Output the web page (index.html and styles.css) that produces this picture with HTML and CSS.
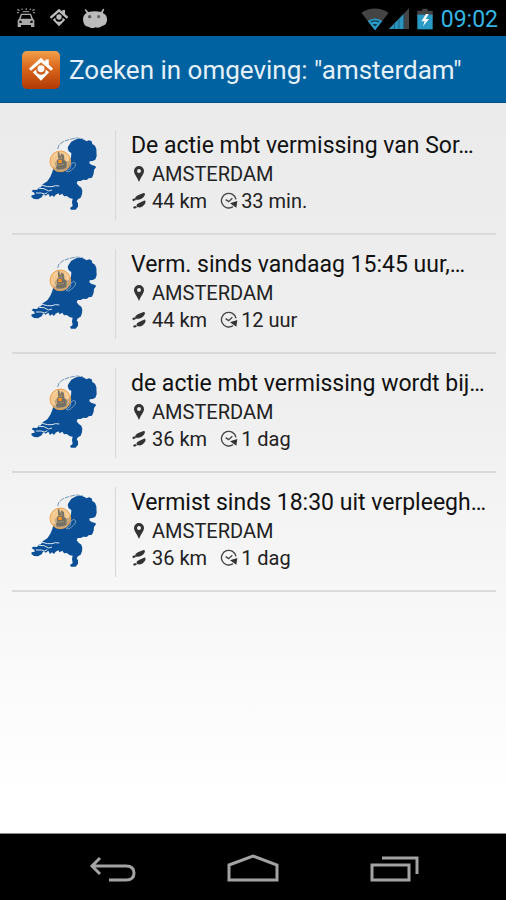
FILE: index.html
```
<!DOCTYPE html>
<html lang="nl">
<head>
    <meta charset="UTF-8">
    <meta name="viewport" content="width=device-width, initial-scale=1.0">
    <title>Zoeken in omgeving</title>
    <link rel="stylesheet" href="styles.css">
</head>
<body>
    <!-- shared icons -->
    <svg class="sprite" aria-hidden="true">
        <symbol id="map" viewBox="0 -4 270 270">
            <path fill="#0b4f97" d="M140 43l8-12 14-7 16-2 10 4 5 4 8-3 8 3 2 8 8 5 4 10 1 22-4 10-8 4-9 1-1 6 7 5 11 3 2 4-6 8-1 11-5 12-10 2-6 5-10-1-8 4-9 0-3 7 6 7 8 6 3 9-1 11-4 10-8 5-4 6 4 6 0 10-7 9-14 0-3-5 8-6-2-12 2-10-8-1-10-7-8 1-5-8-8 5-4-6-8 4-5 7-6-5-6 5-5-10-8 6-7-4-5 9-11 6-12-1-8-6 1-5 9-2-1-6-8-4 4-5 12 1 5-7 7-1 5-9 14-9 9-14 6-14 4-16 4-14 20-8 14 2 8-8-2-14-6-8z"/>
            <path fill="none" stroke="#d8e2ec" stroke-width="3" d="M54 160l22 6 14 0 10-3 12 1M50 171l16 1 14 7 10-3M42 185l16 0 10 3 8-4"/>
            <path fill="none" stroke="#769bbf" stroke-width="3" d="M132 120l12-8 3-14 8-5 6 4-2 9-10 10-9 6z"/>
            <path fill="none" stroke="#6e93b8" stroke-width="3" stroke-dasharray="14 3" d="M107 53l4-12 12-10 20-7 20-4 19 2"/>
            <path fill="#eef0f1" d="M108 62l5-16 13-10 16-6-6 16 4 14 8 5-1 14-12 12-12-6z"/>
            <circle cx="115" cy="90" r="31" fill="#f5bd75" fill-opacity=".8" stroke="#eda34d" stroke-width="3"/>
            <path fill="none" stroke="#fbdcae" stroke-width="3" d="M94 77q6-12 17-12M94 96q4 13 14 17M127 70q12 7 12 19"/>
            <path fill="#6b6a62" fill-opacity=".9" d="M107 63l5 0 2 12 5-9 7 6 1 14 7 6-1 18-10 4-17 1-5-5 5-10-2-12 5-6z"/>
            <path fill="none" stroke="#bd9b6f" stroke-width="2" d="M109 82h12M108 102l18-3M118 73v9"/>
            <path fill="#ff941e" d="M109 86h10v9h-10z"/>
        </symbol>
        <symbol id="pin" viewBox="0 0 12 18">
            <path fill="#333" fill-rule="evenodd" d="M6 1a5 5 0 0 0-5 5c0 3 3 6 5 11 2-5 5-8 5-11a5 5 0 0 0-5-5zm0 3a2 2 0 1 1 0 4 2 2 0 0 1 0-4z"/>
        </symbol>
        <symbol id="steps" viewBox="0 0 48 54">
            <path fill="#333" d="M13 17c3-7 14-9 25-14 4-1 5 4 2 9-5 8-12 11-20 11-6 0-9-2-7-6zM17 39c3-7 13-8 22-13 5-1 6 4 3 9-5 8-12 12-19 11-5 0-8-2-6-7zM4 22l7-3 4 5-9 4zM6 45l7-3 5 5-9 3z"/>
        </symbol>
        <symbol id="clock" viewBox="0 0 54 54">
            <path fill="none" stroke="#444" stroke-width="4" d="M39 44A22 22 0 1 1 48 22"/>
            <path fill="none" stroke="#444" stroke-width="4" d="M17 23l9 6 11-10"/>
            <path fill="#333" d="M30 34l22-7-3 20z"/>
        </symbol>
        <symbol id="house" viewBox="0 0 60 60">
            <path fill="currentColor" d="M2 27L30 2l10 9V6h8v12l10 9-5 5-23-20L7 32z"/>
            <path fill="currentColor" d="M11 35l8-6q0 12 11 12t11-12l8 6-19 20z"/>
            <circle cx="30" cy="27" r="8" fill="currentColor"/>
        </symbol>
    </svg>

    <div class="statusbar">
        <div class="notifications">
            <svg width="20" height="20" viewBox="0 0 60 60">
                <path fill="#aaa" fill-rule="evenodd" d="M15 17h30l6 15 4 5v20H45v-6H15v6H5V37l4-5zM18 21l-4 11h32l-4-11zM10 38v6h9l-4-6zM41 44h9v-6h-5z"/>
                <path stroke="#888" stroke-width="4" d="M20 11h20M4 4l7 4M17 2l2 4M31 1v5M44 2l-2 4M56 4l-7 4M3 14h6M51 14h6"/>
            </svg>
            <svg class="house" width="20" height="20"><use href="#house"/></svg>
            <svg width="26" height="20" viewBox="0 0 78 60">
                <path fill="#bbb" d="M14 15L8 5l3-2 8 9q20-5 38 0l6-10 4 2-5 11q14 5 13 22-1 15-15 17-8 7-20 4-8 5-19-1Q3 55 3 34q0-14 11-19z"/>
                <circle cx="23" cy="26" r="5" fill="#555"/>
                <circle cx="50" cy="26" r="5" fill="#666"/>
            </svg>
        </div>
        <div class="system">
            <svg width="28" height="24" viewBox="0 0 84 72">
                <path fill="#444" d="M1 17q41-25 82 0L42 70z"/>
                <path fill="#289dca" d="M20 42q22-15 44 0L42 70z"/>
                <path fill="none" stroke="#173746" stroke-width="4" d="M29 45q13-7 26 0"/>
                <path fill="#173746" d="M35 51h14l-7 8z"/>
            </svg>
            <svg width="20" height="22" viewBox="0 0 60 66">
                <path fill="#444" d="M60 1v62H0z"/>
                <path fill="#2a93bd" d="M44 18v45H0z"/>
                <path stroke="#164c62" stroke-width="2" d="M16 47v16M30 33v30M45 17v46"/>
            </svg>
            <svg class="battery" width="16" height="22" viewBox="0 0 48 66">
                <path fill="#444" d="M16 2h16v6h15v20H1V8h15z"/>
                <path fill="#2999c5" d="M1 20h46v44H1z"/>
                <path fill="#fff" d="M27 18L13 40h10l-5 15 18-22H26l9-15z"/>
            </svg>
            <time>09:02</time>
        </div>
    </div>

    <header class="header">
        <span class="logo"><svg width="28" height="26"><use href="#house"/></svg></span>
        <h1>Zoeken in omgeving: "amsterdam"</h1>
    </header>

    <main>
        <ul class="list">
            <li><a class="item" href="#">
                <svg class="map"><use href="#map"/></svg>
                <div class="info">
                    <h2>De actie mbt vermissing van Sor…</h2>
                    <p><svg class="icon"><use href="#pin"/></svg>AMSTERDAM</p>
                    <p><svg class="icon"><use href="#steps"/></svg>44 km<svg class="icon clock"><use href="#clock"/></svg>33 min.</p>
                </div>
            </a></li>
            <li><a class="item" href="#">
                <svg class="map"><use href="#map"/></svg>
                <div class="info">
                    <h2>Verm. sinds vandaag 15:45 uur,…</h2>
                    <p><svg class="icon"><use href="#pin"/></svg>AMSTERDAM</p>
                    <p><svg class="icon"><use href="#steps"/></svg>44 km<svg class="icon clock"><use href="#clock"/></svg>12 uur</p>
                </div>
            </a></li>
            <li><a class="item" href="#">
                <svg class="map"><use href="#map"/></svg>
                <div class="info">
                    <h2>de actie mbt vermissing wordt bij…</h2>
                    <p><svg class="icon"><use href="#pin"/></svg>AMSTERDAM</p>
                    <p><svg class="icon"><use href="#steps"/></svg>36 km<svg class="icon clock"><use href="#clock"/></svg>1 dag</p>
                </div>
            </a></li>
            <li><a class="item" href="#">
                <svg class="map"><use href="#map"/></svg>
                <div class="info">
                    <h2>Vermist sinds 18:30 uit verpleegh…</h2>
                    <p><svg class="icon"><use href="#pin"/></svg>AMSTERDAM</p>
                    <p><svg class="icon"><use href="#steps"/></svg>36 km<svg class="icon clock"><use href="#clock"/></svg>1 dag</p>
                </div>
            </a></li>
        </ul>
    </main>

    <nav class="navbar">
        <button aria-label="Terug">
            <svg width="52" height="32" viewBox="0 0 52 32"><path d="M6 13h35q8 0 8 7t-8 7H24M15 5l-8 8 8 8"/></svg>
        </button>
        <button aria-label="Start">
            <svg width="52" height="32" viewBox="0 0 52 32"><path d="M2 12L26 3l24 9v15H2z"/></svg>
        </button>
        <button aria-label="Recente apps">
            <svg width="52" height="32" viewBox="0 0 52 32"><path d="M3 12h37v15H3zM13 5h35v16"/></svg>
        </button>
    </nav>
</body>
</html>
```
FILE: styles.css
```
* {
    box-sizing: border-box;
}
body {
    display: flex;
    flex-direction: column;
    min-height: 100vh;
    margin: 0;
    font-family: Roboto, "Liberation Sans", sans-serif;
    color: #111;
    background-color: #000;
}
svg {
    display: block;
    flex: none;
}
.sprite {
    position: absolute;
    width: 0;
    height: 0;
}
.statusbar {
    display: flex;
    justify-content: space-between;
    align-items: center;
    height: 36px;
    padding: 0 8px 0 16px;
}
.notifications {
    display: flex;
    gap: 13px;
}
.notifications .house {
    color: #bbb;
}
.system {
    display: flex;
    align-items: center;
    padding-top: 2px;
}
.battery {
    margin: 0 8px;
}
.system time {
    font-size: 23px;
    color: #33b5e5;
}
.header {
    display: flex;
    align-items: center;
    gap: 9px;
    height: 67px;
    padding: 2px 22px 0;
    background-color: #0062a0;
    border-bottom: 1px solid #00508a;
}
.logo {
    display: flex;
    justify-content: center;
    align-items: center;
    width: 38px;
    height: 38px;
    border-radius: 5px;
    color: #fff;
    background: linear-gradient(to bottom, #f2a04a, #d9661c 45%, #b23a06);
}
.header h1 {
    margin: 0;
    font-size: 26px;
    font-weight: 400;
    color: #e6f0f8;
    white-space: nowrap;
}
main {
    flex: 1;
    padding: 13px 10px 0 12px;
    background: linear-gradient(to bottom, #ebebeb, #efefef 40%, #fff 95%);
}
.list {
    margin: 0;
    padding: 0;
    list-style: none;
}
.item {
    display: flex;
    align-items: center;
    height: 119px;
    padding-left: 10px;
    border-bottom: 2px solid #dadada;
    color: inherit;
    text-decoration: none;
}
.map {
    width: 90px;
    height: 90px;
}
.info {
    flex: 1;
    min-width: 0;
    height: 90px;
    margin-left: 3px;
    padding-left: 15px;
    border-left: 1px solid #d8d8d8;
}
.info h2 {
    margin: 0;
    padding-top: 1px;
    font-size: 23px;
    font-weight: 400;
    line-height: 30px;
    white-space: nowrap;
}
.info p {
    display: flex;
    align-items: center;
    margin: 0;
    font-size: 20px;
    line-height: 27px;
    color: #222;
}
.icon {
    width: 16px;
    height: 18px;
    margin-right: 5px;
}
.clock {
    width: 18px;
    height: 18px;
    margin: 0 3px 0 13px;
}
.navbar {
    display: flex;
    justify-content: center;
    gap: 90px;
    height: 67px;
    padding-top: 3px;
    border-top: 1px solid #888;
}
.navbar button {
    display: flex;
    align-items: center;
    padding: 0;
    border: none;
    background: none;
    cursor: pointer;
}
.navbar path {
    fill: none;
    stroke: #a3a3a3;
    stroke-width: 3;
}
```
